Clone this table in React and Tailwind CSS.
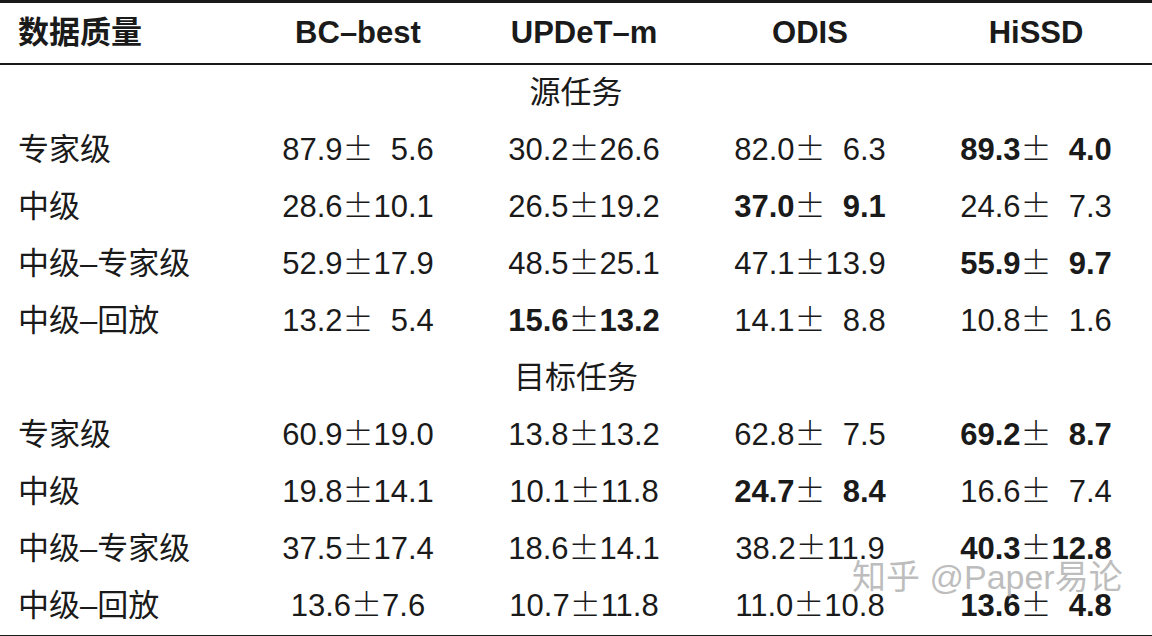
const FONT = 'font-["Liberation_Sans","Noto_Sans_CJK_SC",sans-serif]'
const FS = '\u2007'

const cols = ['BC–best', 'UPDeT–m', 'ODIS', 'HiSSD']

const sections = [
  {
    title: '源任务',
    rows: [
      { label: '专家级', vals: [['87.9', FS + '5.6'], ['30.2', '26.6'], ['82.0', FS + '6.3'], ['89.3', FS + '4.0', true]] },
      { label: '中级', vals: [['28.6', '10.1'], ['26.5', '19.2'], ['37.0', FS + '9.1', true], ['24.6', FS + '7.3']] },
      { label: '中级–专家级', vals: [['52.9', '17.9'], ['48.5', '25.1'], ['47.1', '13.9'], ['55.9', FS + '9.7', true]] },
      { label: '中级–回放', vals: [['13.2', FS + '5.4'], ['15.6', '13.2', true], ['14.1', FS + '8.8'], ['10.8', FS + '1.6']] },
    ],
  },
  {
    title: '目标任务',
    rows: [
      { label: '专家级', vals: [['60.9', '19.0'], ['13.8', '13.2'], ['62.8', FS + '7.5'], ['69.2', FS + '8.7', true]] },
      { label: '中级', vals: [['19.8', '14.1'], ['10.1', '11.8'], ['24.7', FS + '8.4', true], ['16.6', FS + '7.4']] },
      { label: '中级–专家级', vals: [['37.5', '17.4'], ['18.6', '14.1'], ['38.2', '11.9'], ['40.3', '12.8', true]] },
      { label: '中级–回放', vals: [['13.6', '7.6'], ['10.7', '11.8'], ['11.0', '10.8'], ['13.6', FS + '4.8', true]] },
    ],
  },
]

function Value({ mean, sd, bold }) {
  return (
    <div className={`text-center whitespace-pre ${bold ? 'font-bold' : ''}`}>
      {mean}
      <span className='leading-[0] font-light font-["Noto_Sans_CJK_SC",sans-serif]'>±</span>
      {sd}
    </div>
  )
}

export default function App() {
  return (
    <div className={`relative w-[1152px] h-[636px] bg-white text-[#1a1a1a] ${FONT} overflow-hidden`}>
      <div className="border-t-[3px] border-b-2 border-[#1a1a1a]">
        <div className="grid grid-cols-[245px_226px_226px_226px_226px] h-[60px] items-center text-[31px] font-bold">
          <div className="pl-[18px]">数据质量</div>
          {cols.map((c) => (
            <div key={c} className="text-center">{c}</div>
          ))}
        </div>
      </div>

      <div className="border-b-2 border-[#1a1a1a] text-[31px]">
        {sections.map((s) => (
          <div key={s.title}>
            <div className="h-[57px] flex items-center justify-center">{s.title}</div>
            {s.rows.map((r) => (
              <div key={r.label} className="grid grid-cols-[245px_226px_226px_226px_226px] h-[57px] items-center">
                <div className="pl-[18px]">{r.label}</div>
                {r.vals.map(([m, sd, b], i) => (
                  <Value key={i} mean={m} sd={sd} bold={b} />
                ))}
              </div>
            ))}
          </div>
        ))}
      </div>

      <div className="absolute left-[852px] top-[560px] text-[34px] leading-none text-[#a8a8a8]/75 whitespace-pre [text-shadow:0_0_2px_#fff]">
        知乎 @Paper易论
      </div>
    </div>
  )
}
